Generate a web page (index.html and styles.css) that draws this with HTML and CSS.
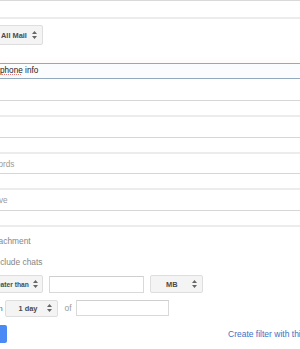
FILE: index.html
```html
<!DOCTYPE html>
<html lang="en">
<head>
    <meta charset="UTF-8">
    <meta name="viewport" content="width=device-width, initial-scale=1.0">
    <title>Search options</title>
    <link rel="stylesheet" href="styles.css">
</head>
<body>
    <div class="form">
        <!-- field above, mostly scrolled out -->
        <div class="field-cut"></div>

        <div class="row-search">
            <span class="select select-mail">All Mail
                <svg class="arrows" width="5" height="8" viewBox="0 0 5 8"><path d="M2.5 0 L5 3 L0 3 Z M0 5 L5 5 L2.5 8 Z" fill="#666"/></svg>
            </span>
        </div>

        <div class="field-focus"><span class="typo">phone</span> info</div>
        <div class="blank"></div>

        <div class="field"></div>
        <div class="field field-short"><span class="hint hint-words">Has the words</span></div>
        <div class="field"><span class="hint hint-have">Doesn't have</span></div>

        <div class="checks">
            <div class="check"><span class="check-attach">Has attachment</span></div>
            <div class="check"><span class="check-chats">Don't include chats</span></div>
        </div>

        <div class="row-size">
            <span class="select select-greater">Greater than
                <svg class="arrows" width="5" height="8" viewBox="0 0 5 8"><path d="M2.5 0 L5 3 L0 3 Z M0 5 L5 5 L2.5 8 Z" fill="#666"/></svg>
            </span>
            <span class="box box-size"></span>
            <span class="select select-mb">MB
                <svg class="arrows" width="5" height="8" viewBox="0 0 5 8"><path d="M2.5 0 L5 3 L0 3 Z M0 5 L5 5 L2.5 8 Z" fill="#666"/></svg>
            </span>
        </div>

        <div class="row-date">
            <span class="date-label">Date within</span>
            <span class="select select-day">1 day
                <svg class="arrows" width="5" height="8" viewBox="0 0 5 8"><path d="M2.5 0 L5 3 L0 3 Z M0 5 L5 5 L2.5 8 Z" fill="#666"/></svg>
            </span>
            <span class="of">of</span>
            <span class="box box-date"></span>
        </div>

        <div class="row-actions">
            <span class="search-btn"></span>
            <a class="filter-link" href="#">Create filter with this search</a>
        </div>
    </div>
</body>
</html>
```

FILE: styles.css
```css
body {
    margin: 0;
    padding: 0;
    background-color: #fff;
    font-family: "Liberation Sans", Arial, sans-serif;
}

.form {
    width: 300px;
    height: 350px;
    overflow: hidden;
    box-sizing: border-box;
    border-bottom: 1px solid #d6d6d6;
}

.field-cut {
    height: 19px;
    box-sizing: border-box;
    border-top: 1px solid #d9d9d9;
    border-bottom: 2px solid #ececec;
}

.row-search {
    height: 44px;
    padding-top: 6px;
    box-sizing: border-box;
}

.select {
    display: flex;
    align-items: center;
    justify-content: space-between;
    box-sizing: border-box;
    height: 20px;
    padding: 0 5px 0 6px;
    background-color: #f4f4f4;
    border: 1px solid #dedede;
    border-radius: 2px;
    font-size: 7.4px;
    font-weight: bold;
    color: #4a4a4a;
    white-space: nowrap;
}

.select-mail {
    width: 49px;
    margin-left: -6px;
}

.field-focus {
    height: 16px;
    box-sizing: border-box;
    border-top: 1px solid #93a9bd;
    border-bottom: 1px solid #93a9bd;
    background-color: #fbfcfe;
    box-shadow: 0 -4px 4px rgba(255, 225, 220, 0.12);
    font-size: 8.2px;
    line-height: 14px;
    color: #222;
}

.typo {
    text-decoration: underline dotted #e07a7a;
    text-decoration-thickness: 1px;
    text-underline-offset: 1px;
}

.blank {
    height: 22px;
    box-sizing: border-box;
    border-bottom: 1px solid #d6d6d6;
}

.field {
    height: 23px;
    margin-top: 14px;
    box-sizing: border-box;
    border-top: 2px solid #ececec;
    border-bottom: 1px solid #d6d6d6;
    font-size: 8.2px;
    line-height: 22px;
    white-space: nowrap;
}

.field-short {
    height: 22px;
}

.hint {
    display: inline-block;
    color: #9a9a9a;
}

.hint-words {
    margin-left: -38px;
}

.hint-have {
    margin-left: -40px;
}

.checks {
    margin-top: 14px;
    padding-top: 4px;
    border-top: 2px solid #ececec;
    font-size: 8.4px;
    color: #858585;
    white-space: nowrap;
}

.check {
    height: 21px;
    line-height: 21px;
}

.check-attach {
    display: inline-block;
    margin-left: -28px;
}

.check-chats {
    display: inline-block;
    margin-left: -28px;
}

.row-size {
    display: flex;
    align-items: center;
    margin-top: 2px;
    height: 18px;
}

.select-greater {
    width: 61px;
    height: 18px;
    margin-left: -18px;
    padding-right: 4px;
    font-size: 6.7px;
    flex-shrink: 0;
}

.box {
    display: block;
    box-sizing: border-box;
    border: 1px solid #d9d9d9;
    border-top-color: #cfcfcf;
    background-color: #fff;
    flex-shrink: 0;
}

.box-size {
    width: 95px;
    height: 17px;
    margin-left: 6px;
}

.select-mb {
    width: 53px;
    height: 18px;
    margin-left: 6px;
    padding-left: 15px;
    flex-shrink: 0;
}

.row-date {
    display: flex;
    align-items: center;
    margin-top: 7px;
    height: 16px;
    white-space: nowrap;
}

.date-label {
    font-size: 8px;
    color: #666;
    margin-left: -37px;
    flex-shrink: 0;
}

.select-day {
    width: 53px;
    height: 17px;
    margin-left: 2px;
    padding-left: 13px;
    flex-shrink: 0;
}

.of {
    font-size: 8.4px;
    color: #9a9a9a;
    margin-left: 7px;
}

.box-date {
    width: 93px;
    height: 16px;
    margin-left: 4px;
}

.row-actions {
    display: flex;
    align-items: center;
    margin-top: 9px;
    height: 18px;
    white-space: nowrap;
}

.search-btn {
    display: block;
    width: 14px;
    height: 18px;
    margin-left: -7px;
    background-color: #4a8af4;
    border-radius: 2px;
    flex-shrink: 0;
}

.filter-link {
    margin-left: 221px;
    font-size: 8.5px;
    color: #3f6fc4;
    text-decoration: none;
}
```
